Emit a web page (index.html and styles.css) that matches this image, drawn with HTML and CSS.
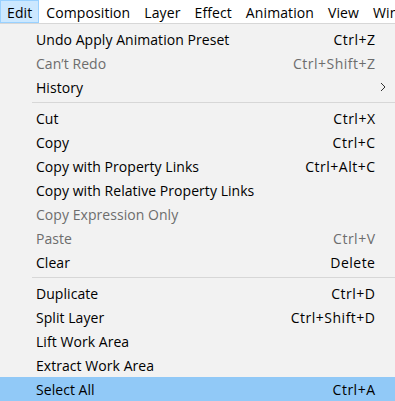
FILE: index.html
```html
<!DOCTYPE html>
<html lang="en">
	<head>
		<meta charset="UTF-8" />
		<title>Edit menu</title>
		<link rel="stylesheet" href="styles.css">
	</head>
	<body>
		<div class="menubar">
			<span class="bar-item active">Edit</span>
			<span class="bar-item">Composition</span>
			<span class="bar-item">Layer</span>
			<span class="bar-item">Effect</span>
			<span class="bar-item">Animation</span>
			<span class="bar-item">View</span>
			<span class="bar-item">Window</span>
		</div>

		<div class="menu">
			<div class="row"><span>Undo Apply Animation Preset</span><span class="key">Ctrl+Z</span><span></span></div>
			<div class="row disabled"><span>Can’t Redo</span><span class="key">Ctrl+Shift+Z</span><span></span></div>
			<div class="row"><span>History</span><span class="key"></span>
				<span class="arrow"><svg width="6" height="10" viewBox="0 0 6 10"><path d="M1 1 L5 5 L1 9" fill="none" stroke="#333" stroke-width="1"/></svg></span>
			</div>
			<div class="sep"></div>
			<div class="row"><span>Cut</span><span class="key">Ctrl+X</span><span></span></div>
			<div class="row"><span>Copy</span><span class="key">Ctrl+C</span><span></span></div>
			<div class="row"><span>Copy with Property Links</span><span class="key">Ctrl+Alt+C</span><span></span></div>
			<div class="row"><span>Copy with Relative Property Links</span><span class="key"></span><span></span></div>
			<div class="row disabled"><span>Copy Expression Only</span><span class="key"></span><span></span></div>
			<div class="row disabled"><span>Paste</span><span class="key">Ctrl+V</span><span></span></div>
			<div class="row"><span>Clear</span><span class="key">Delete</span><span></span></div>
			<div class="sep"></div>
			<div class="row"><span>Duplicate</span><span class="key">Ctrl+D</span><span></span></div>
			<div class="row"><span>Split Layer</span><span class="key">Ctrl+Shift+D</span><span></span></div>
			<div class="row"><span>Lift Work Area</span><span class="key"></span><span></span></div>
			<div class="row"><span>Extract Work Area</span><span class="key"></span><span></span></div>
			<div class="row selected"><span>Select All</span><span class="key">Ctrl+A</span><span></span></div>
		</div>
	</body>
</html>
```

FILE: styles.css
```css
:root {
	--bar-bg: #ffffff;
	--menu-bg: #f2f2f2;
	--line: #d7d7d7;
	--hover: #cce8ff;
	--hover-border: #99d1ff;
	--selected: #91c9f7;
	--text: #000;
	--disabled: #6d6d6d;
}

* {
	box-sizing: border-box;
}

html,
body {
	margin: 0;
	height: 100%;
	overflow: hidden;
}

body {
	font-family: 'Open Sans', sans-serif;
	font-size: 14px;
	letter-spacing: 0.05px;
	color: var(--text);
	background: var(--menu-bg);
	width: 395px;
}

.menubar {
	display: flex;
	height: 24px;
	background: var(--bar-bg);
	border-bottom: 1px solid var(--line);
	white-space: nowrap;
	overflow: hidden;
	letter-spacing: 0.1px;
}

.bar-item {
	padding: 1px 7px 0;
	line-height: 23px;
}

.bar-item.active {
	padding: 1px 6px 0;
	background: var(--hover);
	border: 1px solid var(--hover-border);
	line-height: 21px;
}

.menu {
	padding-top: 3px;
	width: 395px;
}

.row {
	display: grid;
	grid-template-columns: 1fr auto 20px;
	align-items: center;
	height: 24px;
	padding-left: 36px;
	white-space: nowrap;
}

.row.disabled {
	color: var(--disabled);
}

.row.selected {
	background: var(--selected);
}

.key {
	text-align: right;
	letter-spacing: 0.5px;
	margin-right: -0.5px;
}

.arrow {
	display: flex;
	align-items: center;
	padding-left: 5px;
}

.sep {
	height: 7px;
	margin-left: 32px;
	display: flex;
	align-items: center;
}

.sep::before {
	content: '';
	flex: 1;
	height: 1px;
	background: var(--line);
}
```
